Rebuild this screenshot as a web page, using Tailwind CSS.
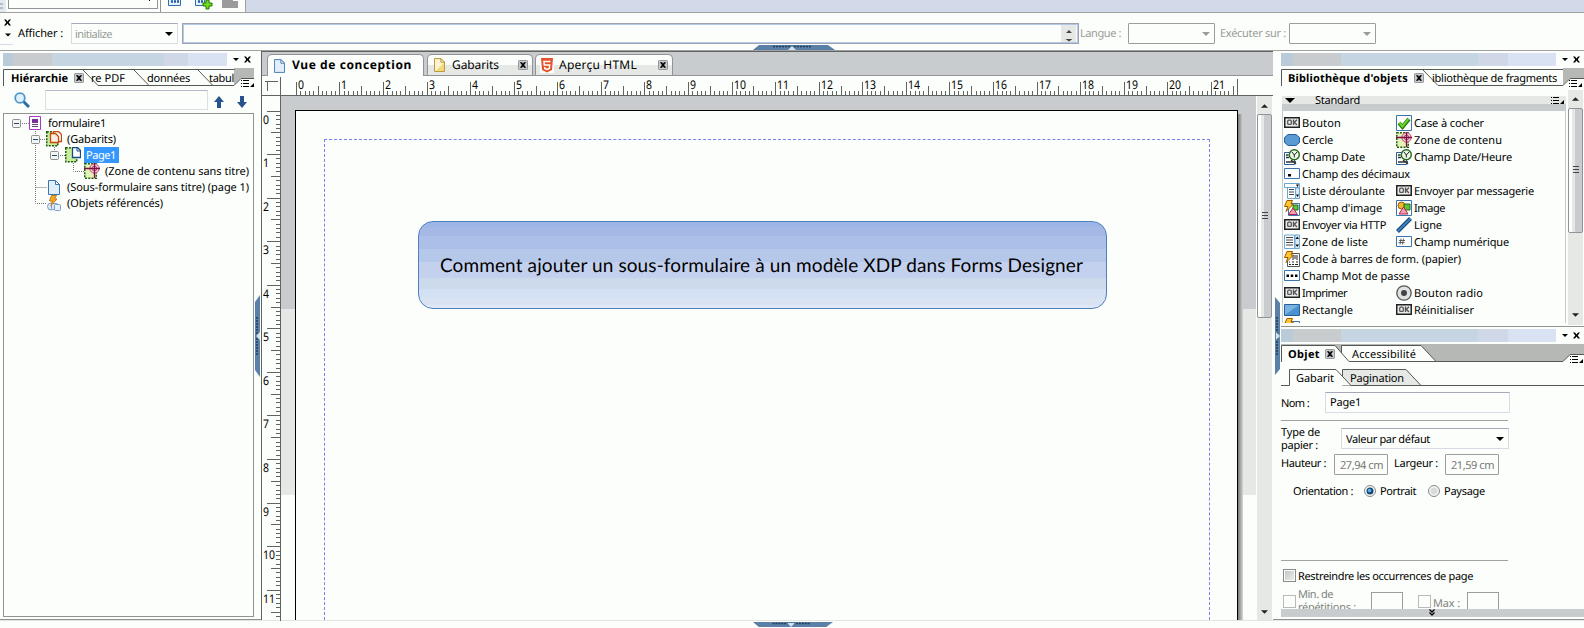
<!DOCTYPE html>
<html lang="fr">
<head>
<meta charset="utf-8">
<title>Forms Designer</title>
<script src="https://cdn.jsdelivr.net/npm/@tailwindcss/browser@4"></script>
</head>
<body class="w-[1584px] h-[628px] overflow-hidden bg-[#fbfefa] text-black text-[11px] leading-[14px] font-['Noto_Sans',sans-serif] [text-rendering:geometricPrecision] [&_.fit]:translate-y-px flex flex-col">
<svg class="hidden">
  <defs>
    <symbol id="x" viewBox="0 0 7 7"><path d="M0 .5h2l1.500 2 1.500-2h2L4.700 3.500 7 6.500H5l-1.500-2-1.500 2H0l2.300-3z" fill="#000"/></symbol>
    <symbol id="close" viewBox="0 0 11 11"><rect x=".5" y=".5" width="10" height="10" rx="1" fill="#c8cccf" stroke="#888c90"/><path d="M2 2.500h2.500l1 1.500 1-1.500H9L6.700 5.500 9 8.500H6.500l-1-1.500-1 1.500H2l2.300-3z"/></symbol>
    <symbol id="down" viewBox="0 0 8 4"><path d="M0 0h8L4 4z"/></symbol>
    <symbol id="menu" viewBox="0 0 13 7"><path d="M0 .5h1m1 0h6M0 3.500h1m1 0h6M0 6.500h1m1 0h6" stroke="#000" stroke-width="1"/><path d="M13 3v4H9z"/></symbol>
    <symbol id="ok" viewBox="0 0 16 11"><rect x=".75" y=".75" width="14.500" height="9.500" fill="#ededed" stroke="#222" stroke-width="1.500"/><rect x="3.700" y="3.200" width="3.600" height="4.200" rx="1" fill="none" stroke="#555" stroke-width="1.300"/><path d="M9.500 2.500v5.500m3.500-5.300L10.300 5.300 13 8" fill="none" stroke="#555" stroke-width="1.400"/></symbol>
    <symbol id="datef" viewBox="0 0 16 16"><path d="M.5 3.500h10v12H.5z" fill="#fff" stroke="#2c5f98"/><path d="M2 6h2.500M2 8.500h3M2 13h10m-5-2 5 4" stroke="#333" fill="none" stroke-width="1.300"/><circle cx="10.300" cy="5.700" r="5" fill="#eefbe8" stroke="#286a20" stroke-width="1.400"/><path d="M8 3l2.300 3L13 3m-2.700 3v2.500" stroke="#222" fill="none"/></symbol>
    <symbol id="zone" viewBox="0 0 16 16"><path d="M.75.75h11.500v14.500H.75z" fill="#e2f5b8" stroke="#245a10" stroke-width="1.500" stroke-dasharray="2 1.200"/><circle cx="10.500" cy="5.500" r="4.700" fill="#f7cdd9" stroke="#b94c70"/><circle cx="10.500" cy="5.500" r="2.400" fill="none" stroke="#b94c70"/><path d="M0 5.500h16M10.500 0v15" stroke="#7c1040" stroke-width="1.300"/></symbol>
    <symbol id="bolt" viewBox="0 0 10 12"><path d="M3 .5h5.500L7 4h2.500L2 11.500 4 6.500H.5z" fill="#ffc62e" stroke="#9a5800"/></symbol>
    <symbol id="doc" viewBox="0 0 12 15"><path d="M.5.5h7l4 4v10H.5z" fill="#e2eefa" stroke="#3b75b0"/><path d="M7.500.5v4h4z" fill="#fff" stroke="#3b75b0"/></symbol>
    <symbol id="minus" viewBox="0 0 9 9"><rect x=".5" y=".5" width="8" height="8" rx="1" fill="#f3f5f2" stroke="#8c8f92"/><path d="M2 4.500h5" stroke="#28466e"/></symbol>
    <symbol id="list" viewBox="0 0 16 16"><path d="M.5 1h10v13.500H.5z" fill="#fff" stroke="#6aa7d2"/><path d="M2 3.500h7M2 6h7M2 8.500h7M2 11h7" stroke="#444"/><path d="M11 1h4.500v13.500H11z" fill="#dceaf5" stroke="#6aa7d2"/><path d="M11.500 5 13.300 2.500 15 5zM11.500 10.500l1.800 2.500 1.700-2.500z"/></symbol>
    <symbol id="htab" viewBox="0 0 82 5"><path d="M0 5 6 0h69l7 5z" fill="#5a80a8"/><path d="M20 1.500h38" stroke="#243c58" stroke-width="1.500" stroke-dasharray="2 1"/><path d="M35 5l4-4 4 4z" fill="#d3e2ef"/></symbol>
    <symbol id="htabdown" viewBox="0 0 82 5"><path d="M0 0 6 5h69l7-5z" fill="#5a80a8"/><path d="M20 1.500h38" stroke="#243c58" stroke-width="1.500" stroke-dasharray="2 1"/><path d="M35 1l4 4 4-4z" fill="#d3e2ef"/></symbol>
    <symbol id="img" viewBox="0 0 16 16"><path d="M.5.500h15v15H.5z" fill="#fff" stroke="#3b75b0"/><circle cx="5.500" cy="5.500" r="3.500" fill="#f2b632" stroke="#9a5800"/><path d="M8 4h6v6H8z" fill="#60c33a" stroke="#246b18"/><path d="M7.500 7 12 14H3z" fill="#f2a0b4" stroke="#a52848"/></symbol>
  </defs>
</svg>

<!-- toolbar -->
<div class="h-[13px] shrink-0 flex border-b border-[#a0a0a0]">
  <div class="w-[246px] flex border-r border-[#a0a0a0]">
    <svg class="w-2 h-3" viewBox="0 0 8 12"><path d="M0 0h6v12H0z" fill="#e3e9f0"/><path d="M0 3h3v2H0zM0 7h3v2H0z" fill="#b4bcc8"/></svg>
    <div class="w-[150px] h-[9px] border border-t-0 border-[#909498] flex justify-end pr-[7px]"><i class="w-px h-px bg-black"></i></div>
    <div class="ml-[2px] w-px bg-[#909498]"></div>
    <svg class="ml-[7px] w-[72px] h-3" viewBox="0 0 72 12"><path d="M.5-1h12v6.500H.5zM27.500-1h11v6.500h-11z" fill="#e6f2fb" stroke="#2f6fb0"/><path d="M3 1.500h8M30 1.500h7" stroke="#1d5ea6" stroke-width="2.500" stroke-dasharray="2 1"/><path d="M38 0h3v3h3v3h-3v3h-3V6h-3V3h3z" fill="#74dc1c" stroke="#227408"/><path d="M54 0h16v8H54z" fill="#9b9b9b"/><path d="M65 0h5v1h-5z" fill="#fff"/></svg>
  </div>
  <div class="flex-1 bg-[#d2daea]"></div>
</div>

<!-- script bar -->
<div class="h-[38px] shrink-0 flex border-b border-[#a0a0a0] text-[#999c98] relative">
  <div class="w-[17px] flex flex-col items-center">
    <svg class="mt-[6px] w-[7px] h-[7px] mr-[3px]"><use href="#x"/></svg>
    <svg class="mt-[7px] w-[6px] h-[4px] mr-[2px] fill-black"><use href="#down"/></svg>
    <div class="mt-[7px] w-[13px] h-px bg-[#d2daee] mr-1"></div>
  </div>
  <span class="fit w-[45px] mt-[13px] ml-[1px] text-black">Afficher :</span>
  <div class="ml-[8px] mt-[10px] w-[107px] h-[21px] border border-[#d8dbe0] border-t-[#a4a8b8] flex items-center pl-[3px] pr-[4px] justify-between">
    <span class="fit w-[37px]">initialize</span><svg class="w-2 h-1 fill-black"><use href="#down"/></svg>
  </div>
  <div class="ml-[4px] mt-[10px] w-[897px] h-[21px] border border-[#a0a4b0] p-px flex"><div class="flex-1 outline outline-[#b4c6ea] flex justify-end pr-px">
    <svg class="w-[15px] h-[17px]" viewBox="0 0 15 17"><path d="M0 0h15v17H0z" fill="#e6e8e6"/><path d="M5 8l3-3 3 3zM4.500 14h7L8 16.500z" fill="#444"/></svg></div></div>
  <span class="fit w-[41px] mt-[13px] ml-[1px]">Langue :</span>
  <div class="ml-[7px] mt-[10px] w-[87px] h-[21px] rounded-[1px] border border-[#9a9d9a] flex items-center justify-end pr-[4px]"><svg class="w-2 h-1 fill-[#999c98]"><use href="#down"/></svg></div>
  <span class="fit w-[66px] mt-[13px] ml-[5px]">Exécuter sur :</span>
  <div class="ml-[3px] mt-[10px] w-[87px] h-[21px] rounded-[1px] border border-[#9a9d9a] flex items-center justify-end pr-[4px]"><svg class="w-2 h-1 fill-[#999c98]"><use href="#down"/></svg></div>
  <svg class="absolute left-[753px] top-[32px] w-[82px] h-[5px]"><use href="#htab"/></svg>
</div>

<div class="h-[570px] shrink-0 flex border-b border-[#e2e5e2]">
  <!-- left panel -->
  <section class="w-[255px] pl-[3px] flex flex-col border-b border-[#909090]">
    <div class="h-[13px] mt-[2px] flex items-center">
      <i class="w-[10px] h-full bg-[#b9cbd9]"></i><i class="w-[39px] h-full bg-[#c8cccf]"></i><i class="w-[112px] h-full bg-[#c5d6e2]"></i><i class="w-[24px] h-full bg-[#d0d8e7]"></i><i class="w-[39px] h-full bg-[#d9e2f3]"></i>
      <svg class="ml-[6px] w-[6px] h-[3px]"><use href="#down"/></svg><svg class="ml-[5px] w-[7px] h-[7px]"><use href="#x"/></svg>
    </div>
    <div class="relative mt-[2px] h-[19px] flex items-center">
      <svg class="absolute left-0 top-0 w-[251px] h-[19px]" viewBox="0 0 251 19"><path d="M231 0h20v10h-13l-7 7z" fill="#b5b8b4"/><path d="M.5 18V1.500h231M80 2l15 15.500h136l7-7h13M131 2l15 15.500M195 2l15 15.500" fill="none" stroke="#555855"/></svg>
      <b class="fit w-[57px] ml-[8px] relative">Hiérarchie</b><svg class="ml-[6px] w-[10px] h-[10px] relative"><use href="#close"/></svg>
      <span class="fit w-[34px] ml-[7px]">re PDF</span><span class="fit w-[43px] ml-[22px]">données</span><span class="fit w-[25px] ml-[19px]">tabul</span>
      <svg class="ml-[7px] mt-[12px] w-[13px] h-[7px]"><use href="#menu"/></svg>
    </div>
    <div class="mt-[3px] h-[20px] flex items-center">
      <svg class="ml-[11px] w-[16px] h-[16px]" viewBox="0 0 16 16"><path d="M9 9l6 6" stroke="#2b6f9f" stroke-width="3"/><circle cx="6" cy="6" r="4.800" fill="#dff1fc" stroke="#4d97cb" stroke-width="1.800"/></svg>
      <div class="ml-[15px] w-[163px] h-[20px] border border-[#dcdfe4] border-t-[#b4b8c8]"></div>
      <svg class="ml-[6px] mt-[4px] w-[10px] h-[12px]" viewBox="0 0 10 12"><path d="M5 0l5 6H7v6H3V6H0z" fill="#28538e"/></svg>
      <svg class="ml-[13px] mt-[4px] w-[10px] h-[12px]" viewBox="0 0 10 12"><path d="M5 12l5-6H7V0H3v6H0z" fill="#28538e"/></svg>
    </div>
    <div class="mt-[3px] w-[251px] h-[504px] border border-[#909390] relative pt-px">
      <svg class="absolute left-0 top-0 w-[90px] h-[100px]" viewBox="0 0 90 100"><path d="M16 9.500h10M31.500 17v72.500h11M36 25.500h8M50.500 31v6M54 41.500h8M69.500 47v10.500h11M31.500 73.500h11" fill="none" stroke="#777" stroke-dasharray="1 1"/></svg>
      <div class="relative flex flex-col">
        <div class="h-4 flex items-center pl-[8px]"><svg class="w-[9px] h-[9px]"><use href="#minus"/></svg><svg class="ml-[8px] w-[12px] h-[14px]" viewBox="0 0 12 14"><path d="M.5.5h11v13H.5z" fill="#fff" stroke="#a63cc4"/><path d="M3 3.500h6v3H3z" fill="#7d2a9e"/><path d="M3 3.500h6M3 6.500h6M3 8.500h6M3 10.500h6" stroke="#6a4580"/></svg><span class="fit w-[58px] ml-[7px]">formulaire1</span></div>
        <div class="h-4 flex items-center pl-[27px]"><svg class="w-[9px] h-[9px]"><use href="#minus"/></svg><svg class="ml-[6px] w-[16px] h-[16px]" viewBox="0 0 16 16"><path d="M.75.75h11v14h-11z" fill="#c6ee9c" stroke="#245a10" stroke-width="1.500" stroke-dasharray="2 1.200"/><path d="M7.500.5h5l3 3v7h-8z" fill="#fff" stroke="#c5480c" stroke-width="1.300"/><path d="M4.500 2.500h5l3 3v6h-8z" fill="#fdeee2" stroke="#c5480c" stroke-width="1.300"/></svg><span class="fit w-[49px] ml-[5px]">(Gabarits)</span></div>
        <div class="h-4 flex items-center pl-[46px]"><svg class="w-[9px] h-[9px]"><use href="#minus"/></svg><svg class="ml-[6px] w-[16px] h-[16px]" viewBox="0 0 16 16"><path d="M.75.75h11v14h-11z" fill="#c6ee9c" stroke="#245a10" stroke-width="1.500" stroke-dasharray="2 1.200"/><path d="M7.500.5h5l3 3v7h-8z" fill="#fff" stroke="#174a86" stroke-width="1.300"/><path d="M12 .5v3.500h3.500" fill="none" stroke="#174a86"/></svg><span class="ml-[3px] w-[35px] h-4 bg-[#3397fd] text-white flex items-center pl-[2px]"><span class="fit w-[30px]">Page1</span></span></div>
        <div class="h-4 flex items-center pl-[80px]"><svg class="w-4 h-4"><use href="#zone"/></svg><span class="fit w-[144px] ml-[5px]">(Zone de contenu sans titre)</span></div>
        <div class="h-4 flex items-center pl-[44px]"><svg class="w-[12px] h-[15px]"><use href="#doc"/></svg><span class="fit w-[182px] ml-[7px]">(Sous-formulaire sans titre) (page 1)</span></div>
        <div class="h-4 flex items-center pl-[43px]"><svg class="w-[14px] h-[16px]" viewBox="0 0 14 16"><circle cx="4" cy="11.500" r="3.500" fill="#dbe7f5" stroke="#7c9ecb"/><rect x="4.500" y="8.500" width="6" height="6" rx="1" fill="#dbe7f5" stroke="#7c9ecb"/><rect x="7.500" y="9.500" width="6" height="6" rx="1" fill="#e8f0fa" stroke="#7c9ecb"/><path d="M4.500.5h5L7.500 4H10L4 10.500l1.500-4.500H2.500z" fill="#f7a823" stroke="#c4791a"/></svg><span class="fit w-[96px] ml-[6px]">(Objets référencés)</span></div>
      </div>
    </div>
  </section>
  <div class="w-[6px] pt-[244px] border-b border-[#909090]"><svg class="w-[5px] h-[82px]" viewBox="0 0 5 82"><path d="M5 0 0 7v68l5 7z" fill="#5a80a8"/><path d="M2 22v38" stroke="#243c58" stroke-width="1.500" stroke-dasharray="2 1"/><path d="M5 37 1 41l4 4z" fill="#d3e2ef"/></svg></div>

  <!-- design view -->
  <main class="w-[1012px] border-l border-t border-[#606460] flex flex-col">
    <div class="h-[24px] bg-[#c8cccf] border-b border-[#909498] flex items-end pl-[5px]">
      <div class="-mb-px w-[157px] h-[22px] bg-[#fbfefa] border border-b-0 border-[#909498] rounded-t-[5px] flex items-center pl-[6px] text-[12px]"><svg class="w-[11px] h-[14px]"><use href="#doc"/></svg><b class="fit w-[120px] ml-[7px] -mt-[3px]">Vue de conception</b></div>
      <div class="ml-[3px] w-[106px] h-[21px] bg-linear-to-b from-[#fbfefa] from-50% to-[#e5e8e5] to-50% border border-b-0 border-[#909498] rounded-t-[5px] flex items-center pl-[6px] text-[12px]"><svg class="w-[11px] h-[14px]" viewBox="0 0 12 15"><path d="M.5.5h7l4 4v10H.5z" fill="#fdf3cc" stroke="#b28a28"/><path d="M11 5v9H2z" fill="#f3d878"/><path d="M7.500.5v4h4z" fill="#fff" stroke="#b28a28"/></svg><span class="fit w-[47px] ml-[7px] -mt-[2px]">Gabarits</span><svg class="ml-[19px] w-[10px] h-[10px]"><use href="#close"/></svg></div>
      <div class="ml-[2px] w-[138px] h-[21px] bg-linear-to-b from-[#fbfefa] from-50% to-[#e5e8e5] to-50% border border-b-0 border-[#909498] rounded-t-[5px] flex items-center pl-[4px] text-[12px]"><svg class="w-[14px] h-[15px]" viewBox="0 0 14 15"><path d="M0 0h14v15H0z" fill="#fff"/><path d="M1 0h12l-1 12-5 2.500L2 12z" fill="#e5532b"/><path d="M10.500 3.500H4l.3 3.500h5.400l-.4 3.500-2.300 1-2.300-1V9" fill="none" stroke="#fff" stroke-width="1.500"/></svg><span class="fit w-[78px] ml-[5px] -mt-[2px]">Aperçu HTML</span><svg class="ml-[21px] w-[10px] h-[10px]"><use href="#close"/></svg></div>
    </div>
    <svg id="hruler" class="w-[1011px] h-[20px] shrink-0 text-[12px]" viewBox="262 76 1011 20"></svg>
    <div class="flex-1 flex min-h-0">
      <svg id="vruler" class="w-[19px] h-[525px] shrink-0 text-[12px]" viewBox="262 96 19 525"></svg>
      <div class="w-[975px] flex flex-col relative">
        <div class="h-[213px] bg-[#c8cccf]"></div><div class="h-[186px] bg-[#e5e8e5]"></div>
        <div class="absolute left-[14px] top-[14px] w-[943px] h-[510px] bg-[#fbfefa] border border-b-0 border-black flex">
          <div class="mt-[28px] ml-[28px] w-[886px] border border-b-0 border-dashed border-[#7c80ea]">
            <div class="mt-[81px] ml-[93px] w-[689px] h-[88px] rounded-[15px] border border-[#4f81bd] bg-[linear-gradient(#9cb6e8_5px,#a3b8e5_5px,#a3b8e5_14px,#acbfe8_14px,#acbfe8_27px,#b5c8ea_27px,#b5c8ea_40px,#c3d1ef_40px,#c3d1ef_56px,#cddaec_56px,#cddaec_67px,#d4e0f3_67px,#d4e0f3_76px,#dae3f1_76px,#dae3f1_83px,#dfe8f8_83px)] pt-[31px] pl-[21px]">
              <span class="fit block w-[643px] text-[19px] leading-6 font-['Lato',sans-serif]">Comment ajouter un sous-formulaire à un modèle XDP dans Forms Designer</span>
            </div>
          </div>
        </div>
        <div class="absolute left-[957px] top-[18px] w-[5px] h-[506px] bg-linear-to-r from-[#777a78] to-[#d4d8d6]"></div>
      </div>
      <div class="w-[17px] bg-[#e6e8e6] border-x border-x-[#fbfefa] flex flex-col items-center">
        <svg class="mt-[8px] w-[7px] h-[4px] rotate-180 fill-[#222]"><use href="#down"/></svg>
        <div class="mt-[6px] w-[15px] h-[204px] rounded-[2px] border border-[#909498] bg-[linear-gradient(90deg,#fbfefa_3px,#e5e8e5_3px,#e5e8e5_6px,#c8cccf_6px)] flex flex-col items-center gap-[2px] pt-[97px]"><i class="w-[6px] h-px bg-[#444]"></i><i class="w-[6px] h-px bg-[#444]"></i><i class="w-[6px] h-px bg-[#444]"></i></div>
        <svg class="mt-auto mb-[6px] w-[7px] h-[4px] fill-[#222]"><use href="#down"/></svg>
      </div>
    </div>
  </main>

  <!-- right panels -->
  <div class="w-[8px] pt-[246px] pl-[2px] border-b border-[#909090]"><svg class="w-[5px] h-[78px]" viewBox="0 0 5 78"><path d="M0 0l5 6v66l-5 6z" fill="#5a80a8"/><path d="M2 20v38" stroke="#243c58" stroke-width="1.500" stroke-dasharray="2 1"/><path d="M1 35l4 4-4 4z" fill="#d3e2ef"/></svg></div>
  <section class="w-[303px] flex flex-col border-b border-[#909090]">
    <div class="h-[13px] mt-[2px] shrink-0 flex items-center">
      <i class="w-[12px] h-full bg-[#b9cbd9]"></i><i class="w-[48px] h-full bg-[#c8cccf]"></i><i class="w-[137px] h-full bg-[#c5d6e2]"></i><i class="w-[30px] h-full bg-[#d0d8e7]"></i><i class="w-[48px] h-full bg-[#d9e2f3]"></i>
      <svg class="ml-[6px] w-[6px] h-[3px]"><use href="#down"/></svg><svg class="ml-[5px] w-[7px] h-[7px]"><use href="#x"/></svg>
    </div>
    <div class="relative mt-[2px] h-[19px] shrink-0 flex items-center">
      <svg class="absolute left-0 top-0 w-[303px] h-[19px]" viewBox="0 0 303 19"><path d="M282 0h21v10h-14l-7 7z" fill="#b5b8b4"/><path d="M.5 18V1.500h281.500M142 2l15 15.500h125l7-7h14" fill="none" stroke="#555855"/></svg>
      <b class="fit w-[120px] ml-[7px] relative">Bibliothèque d'objets</b><svg class="ml-[6px] w-[10px] h-[10px] relative"><use href="#close"/></svg>
      <span class="fit w-[125px] ml-[8px]">ibliothèque de fragments</span><svg class="ml-[12px] mt-[12px] w-[13px] h-[7px]"><use href="#menu"/></svg>
    </div>
    <div class="h-[239px] mt-[3px] shrink-0 flex">
      <div class="w-[285px] pl-px pt-[6px] flex flex-col">
        <div class="h-[15px] shrink-0 bg-linear-to-b from-[#e5e8e5] from-50% to-[#c8cccf] to-50% flex">
          <svg class="ml-[3px] mt-[2px] w-[10px] h-[5px]"><use href="#down"/></svg><span class="fit w-[45px] ml-[20px] -mt-[3px]">Standard</span><svg class="ml-auto mr-[2px] mt-[1px] w-[13px] h-[7px]"><use href="#menu"/></svg>
        </div>
        <div class="h-[212px] border-x border-[#c8cccf] pt-[3px] pl-px overflow-hidden grid grid-cols-[112px_170px] auto-rows-[17px]">
          <div class="flex items-center gap-[2px]"><svg class="w-4 h-[11px]"><use href="#ok"/></svg><span class="fit w-[39px]">Bouton</span></div>
          <div class="flex items-center gap-[2px]"><svg class="w-4 h-4" viewBox="0 0 16 16"><path d="M.5.5h15v15H.5z" fill="#fff" stroke="#3b75b0"/><path d="M3 8l3.500 4L13 4" fill="none" stroke="#237a0c" stroke-width="4"/><path d="M3.500 8l3 3.500L12.500 4" fill="none" stroke="#6bdb27" stroke-width="2"/></svg><span class="fit w-[70px]">Case à cocher</span></div>
          <div class="flex items-center gap-[2px]"><svg class="w-4 h-3" viewBox="0 0 16 12"><path d="M4 .5h8l3.500 3v5l-3.500 3H4L.5 8.500v-5z" fill="#5b9ad2" stroke="#245f9c"/></svg><span class="fit w-[31px]">Cercle</span></div>
          <div class="flex items-center gap-[2px]"><svg class="w-4 h-4"><use href="#zone"/></svg><span class="fit w-[88px]">Zone de contenu</span></div>
          <div class="flex items-center gap-[2px]"><svg class="w-4 h-4"><use href="#datef"/></svg><span class="fit w-[63px]">Champ Date</span></div>
          <div class="flex items-center gap-[2px]"><svg class="w-4 h-4"><use href="#datef"/></svg><span class="fit w-[98px]">Champ Date/Heure</span></div>
          <div class="col-span-2 flex items-center gap-[2px]"><svg class="w-4 h-[11px]" viewBox="0 0 16 11"><path d="M.5.5h15v10H.5z" fill="#fff" stroke="#3b75b0"/><path d="M4 6h3v2.500H4z"/></svg><span class="fit w-[108px]">Champ des décimaux</span></div>
          <div class="flex items-center gap-[2px]"><svg class="w-4 h-4" viewBox="0 0 16 16"><path d="M.5.5h15v4H.5zM3.500 4.500h8v11h-8z" fill="#fff" stroke="#6aa7d2"/><path d="M5 6.500h5M5 9h5M5 11.500h5" stroke="#444"/><path d="M11.500 5h4v10.500h-4z" fill="#dceaf5" stroke="#6aa7d2"/><path d="M12 1.500h3L13.500 4zM12 11.500h3L13.500 14z"/></svg><span class="fit w-[83px]">Liste déroulante</span></div>
          <div class="flex items-center gap-[2px]"><svg class="w-4 h-[11px]"><use href="#ok"/></svg><span class="fit w-[120px]">Envoyer par messagerie</span></div>
          <div class="flex items-center gap-[2px]"><svg class="w-4 h-4" viewBox="0 0 16 16"><path d="M4.500 3.500h11v12h-11z" fill="#fff" stroke="#3b75b0"/><path d="M9 5h5v5H9z" fill="#60c33a" stroke="#246b18"/><path d="M9 8l4.500 6.500h-9z" fill="#f2a0b4" stroke="#a52848"/><use href="#bolt" width="10" height="12"/></svg><span class="fit w-[80px]">Champ d'image</span></div>
          <div class="flex items-center gap-[2px]"><svg class="w-4 h-4"><use href="#img"/></svg><span class="fit w-[31px]">Image</span></div>
          <div class="flex items-center gap-[2px]"><svg class="w-4 h-[11px]"><use href="#ok"/></svg><span class="fit w-[84px]">Envoyer via HTTP</span></div>
          <div class="flex items-center gap-[2px]"><svg class="w-4 h-4" viewBox="0 0 16 16"><path d="M1.500 14.500 14.500 1.500" stroke="#123f70" stroke-width="4"/><path d="M1.500 14.500 14.500 1.500" stroke="#3a85c6" stroke-width="2"/></svg><span class="fit w-[28px]">Ligne</span></div>
          <div class="flex items-center gap-[2px]"><svg class="w-4 h-4"><use href="#list"/></svg><span class="fit w-[66px]">Zone de liste</span></div>
          <div class="flex items-center gap-[2px]"><svg class="w-4 h-[11px]" viewBox="0 0 16 11"><path d="M.5.5h15v10H.5z" fill="#fff" stroke="#3b75b0"/><path d="M5 2.500 4 8.500M7.500 2.500l-1 6M3 4.500h6M2.500 6.500h6" stroke="#444" stroke-width=".8"/></svg><span class="fit w-[95px]">Champ numérique</span></div>
          <div class="col-span-2 flex items-center gap-[2px]"><svg class="w-4 h-4" viewBox="0 0 16 16"><path d="M3.500 2.500h12v13h-12z" fill="#fff" stroke="#555"/><path d="M9 4v5m2-5v4m2-4v5M5 13.500h2m1 0h2m1 0h3M5 11h1m2 0h2m2 0h2" stroke="#222"/><use href="#bolt" width="10" height="12"/></svg><span class="fit w-[159px]">Code à barres de form. (papier)</span></div>
          <div class="col-span-2 flex items-center gap-[2px]"><svg class="w-4 h-[11px]" viewBox="0 0 16 11"><path d="M.5.5h15v10H.5z" fill="#fff" stroke="#3b75b0"/><path d="M2.500 4.500H5V7H2.500zM6.700 4.500h2.500V7H6.700zM11 4.500h2.500V7H11z"/></svg><span class="fit w-[108px]">Champ Mot de passe</span></div>
          <div class="flex items-center gap-[2px]"><svg class="w-4 h-[11px]"><use href="#ok"/></svg><span class="fit w-[45px]">Imprimer</span></div>
          <div class="flex items-center gap-[2px]"><svg class="w-4 h-4" viewBox="0 0 16 16"><circle cx="8" cy="8" r="7.200" fill="#dfe2e2" stroke="#555" stroke-width="1.300"/><circle cx="8" cy="8" r="3" fill="#444"/></svg><span class="fit w-[69px]">Bouton radio</span></div>
          <div class="flex items-center gap-[2px]"><svg class="w-4 h-[12px]" viewBox="0 0 16 12"><path d="M.5.5h15v11H.5z" fill="#4a92cf" stroke="#245f9c"/><path d="M1 1h14L1 11z" fill="#79b2de"/></svg><span class="fit w-[51px]">Rectangle</span></div>
          <div class="flex items-center gap-[2px]"><svg class="w-4 h-[11px]"><use href="#ok"/></svg><span class="fit w-[60px]">Réinitialiser</span></div>
          <div class="col-span-2"><svg class="w-4 h-4" viewBox="0 0 16 16"><path d="M5 3.500h10.500v12H5z" fill="#fff" stroke="#3b75b0"/><use href="#bolt" width="10" height="12"/></svg></div>
        </div>
      </div>
      <div class="ml-px w-[17px] bg-[#e6e8e6] border-x border-x-[#fbfefa] flex flex-col items-center mb-[4px]">
        <svg class="mt-[7px] w-[7px] h-[4px] rotate-180 fill-[#222]"><use href="#down"/></svg>
        <div class="mt-[7px] w-[15px] h-[125px] rounded-[2px] border border-[#909498] bg-[linear-gradient(90deg,#fbfefa_3px,#e5e8e5_3px,#e5e8e5_6px,#c8cccf_6px)] flex flex-col items-center gap-[2px] pt-[57px]"><i class="w-[6px] h-px bg-[#444]"></i><i class="w-[6px] h-px bg-[#444]"></i><i class="w-[6px] h-px bg-[#444]"></i></div>
        <svg class="mt-auto mb-[8px] w-[7px] h-[4px] fill-[#222]"><use href="#down"/></svg>
      </div>
    </div>
    <div class="-mt-[3px] h-px shrink-0 bg-[#909390]"></div>
    <div class="h-[13px] mt-[2px] shrink-0 flex items-center">
      <i class="w-[12px] h-full bg-[#b9cbd9]"></i><i class="w-[48px] h-full bg-[#c8cccf]"></i><i class="w-[137px] h-full bg-[#c5d6e2]"></i><i class="w-[30px] h-full bg-[#d0d8e7]"></i><i class="w-[48px] h-full bg-[#d9e2f3]"></i>
      <svg class="ml-[6px] w-[6px] h-[3px]"><use href="#down"/></svg><svg class="ml-[5px] w-[7px] h-[7px]"><use href="#x"/></svg>
    </div>
    <div class="relative mt-[2px] h-[19px] shrink-0 flex items-center">
      <svg class="absolute left-0 top-0 w-[303px] h-[19px]" viewBox="0 0 303 19"><path d="M0 0h303v10.500h-14l-7 7H0z" fill="#b5b8b4"/><path d="M60.500 17.500v-16H140l15 16z" fill="#fbfefa" stroke="#555855"/><path d="M0 18V1.500h54l14 16V19H0z" fill="#fbfefa"/><path d="M.5 18V1.500H54l14 16h214l7-7h14" fill="none" stroke="#555855"/></svg>
      <b class="fit w-[32px] ml-[7px] relative">Objet</b><svg class="ml-[5px] w-[10px] h-[10px] relative"><use href="#close"/></svg>
      <span class="fit w-[64px] ml-[17px] relative">Accessibilité</span><svg class="ml-auto mr-[1px] mt-[12px] w-[13px] h-[7px] relative"><use href="#menu"/></svg>
    </div>
    <div class="relative mt-[6px] h-[17px] shrink-0 flex items-center">
      <svg class="absolute left-0 top-0 w-[303px] h-[17px]" viewBox="0 0 303 17"><path d="M61.500 16.500V.5H125l15 16z" fill="#e5e8e5" stroke="#555855"/><path d="M8 0h47l15 16.500H8z" fill="#fbfefa"/><path d="M0 16.500h8.500V.5H55l15 16h233" fill="none" stroke="#555855"/></svg>
      <span class="fit w-[38px] ml-[15px] relative">Gabarit</span><span class="fit w-[54px] ml-[16px] relative">Pagination</span>
    </div>
    <div class="mt-[6px] h-[21px] shrink-0 flex items-center">
      <span class="fit w-[28px]">Nom :</span><div class="ml-[16px] w-[185px] h-[21px] border border-[#d8dbe4] border-t-[#a4a8b8] px-[4px] py-[2px]"><span class="fit block w-[31px]">Page1</span></div>
    </div>
    <div class="mt-[7px] w-[227px] h-px shrink-0 bg-[#a0a39f]"></div>
    <div class="mt-[5px] h-[28px] shrink-0 flex">
      <div class="w-[60px] leading-[13px] -mt-px flex flex-col"><span class="fit w-[39px]">Type de</span><span class="fit w-[37px]">papier :</span></div>
      <div class="mt-[2px] w-[168px] h-[21px] border border-[#d8dbe4] border-t-[#a4a8b8] flex items-center justify-between pl-[4px] pr-[4px]"><span class="fit w-[84px]">Valeur par défaut</span><svg class="w-2 h-1"><use href="#down"/></svg></div>
    </div>
    <div class="h-[21px] shrink-0 flex">
      <span class="fit w-[45px] mt-[2px]">Hauteur :</span><div class="ml-[8px] w-[54px] h-[21px] rounded-[1px] border border-[#9a9d9a] flex items-center pl-[5px] text-[#777]"><span class="fit w-[43px]">27,94 cm</span></div>
      <span class="fit w-[44px] mt-[2px] ml-[6px]">Largeur :</span><div class="ml-[7px] w-[54px] h-[21px] rounded-[1px] border border-[#9a9d9a] flex items-center pl-[5px] text-[#777]"><span class="fit w-[43px]">21,59 cm</span></div>
    </div>
    <div class="mt-[9px] h-[14px] shrink-0 flex items-center pl-[12px]">
      <span class="fit w-[60px] -mt-px">Orientation :</span>
      <svg class="ml-[11px] w-[12px] h-[12px]" viewBox="0 0 12 12"><circle cx="6" cy="6" r="5.500" fill="#f4f6f4" stroke="#888"/><circle cx="6" cy="6" r="3.500" fill="#174a7c"/><circle cx="5.500" cy="5.500" r="1.700" fill="#5cb8ea"/></svg><span class="fit w-[36px] ml-[4px]">Portrait</span>
      <svg class="ml-[12px] w-[12px] h-[12px]" viewBox="0 0 12 12"><circle cx="6" cy="6" r="5.500" fill="#f4f6f4" stroke="#888"/><circle cx="6" cy="6" r="3.500" fill="#d8dbd9"/></svg><span class="fit w-[41px] ml-[4px]">Paysage</span>
    </div>
    <div class="mt-[62px] w-[227px] h-px shrink-0 bg-[#a0a39f]"></div>
    <div class="mt-[8px] h-[13px] shrink-0 flex items-center pl-[2px]"><i class="w-[13px] h-[13px] border border-[#888b88] bg-linear-to-br from-[#c0c4c7] to-[#eef0ee] shadow-[inset_0_0_0_1px_#fbfefa]"></i><span class="fit w-[175px] ml-[2px]">Restreindre les occurrences de page</span></div>
    <div class="mt-[5px] h-[22px] shrink-0 flex pl-[2px] overflow-hidden text-[#808380]">
      <i class="w-[13px] h-[13px] mt-[8px] border border-[#b8bbb8]"></i><div class="ml-[2px] w-[58px] leading-[13px] flex flex-col"><span class="fit w-[35px]">Min. de</span><span class="fit w-[58px]">répétitions :</span></div>
      <i class="ml-[15px] mt-[5px] w-[32px] h-[21px] border border-[#9a9d9a]"></i>
      <i class="ml-[15px] mt-[8px] w-[13px] h-[13px] border border-[#b8bbb8]"></i><span class="fit w-[27px] ml-[2px] mt-[9px]">Max :</span>
      <i class="ml-[7px] mt-[5px] w-[32px] h-[21px] border border-[#9a9d9a]"></i>
    </div>
    <div class="h-[8px] shrink-0 bg-[#c8cccf] pl-[148px]"><svg class="w-[6px] h-[7px]" viewBox="0 0 6 7"><path d="M.5.5 3 3 5.500.5M.5 3.500 3 6l2.500-2.500" fill="none" stroke="#000" stroke-width="1.300"/></svg></div>
  </section>
</div>
<div class="flex-1 pt-px pl-[753px]"><svg class="w-[80px] h-[5px] block"><use href="#htabdown"/></svg></div>

<script>
  // Rulers: one centimetre spans 43.57 px.
  const CM = 43.57;
  const tick = (n) => n % 10 === 0 ? 13 : n % 5 === 0 ? 9 : 4;
  let h = '<path d="M262 95.500H1273M280.500 77V95M265 81.500h13M267.500 81v10M1237.500 79v16', t = '';
  for (let n = 0; n <= 215; n++) {
    const x = Math.floor(296.400 + n * CM / 10) + .5;
    h += `M${x} ${95 - tick(n)}V95`;
    if (n % 10 === 0) t += `<text x="${x + 1.500}" y="89" textLength="${n < 100 ? 6 : 12}" lengthAdjust="spacingAndGlyphs">${n / 10}</text>`;
  }
  document.getElementById('hruler').innerHTML = h + '" stroke="#606460" fill="none"/>' + t;
  let v = '<path d="M280.500 96V621'; t = '';
  for (let n = 0; n <= 116; n++) {
    const y = Math.floor(111 + n * CM / 10) + .5;
    v += `M${280 - tick(n)} ${y}H280`;
    if (n % 10 === 0) t += `<text x="263" y="${y + 12.500}" textLength="${n < 100 ? 6 : 12}" lengthAdjust="spacingAndGlyphs">${n / 10}</text>`;
  }
  document.getElementById('vruler').innerHTML = v + '" stroke="#606460" fill="none"/>' + t;

  // Spread each label over the width of its box.
  function fit(el) {
    el.style.whiteSpace = 'nowrap';
    el.style.flexShrink = '0';
    el.style.letterSpacing = '0px';
    const r = document.createRange();
    r.selectNodeContents(el);
    const w = el.getBoundingClientRect().width;
    el.style.letterSpacing = (w - r.getBoundingClientRect().width) / el.textContent.length + 'px';
  }
  const labels = [...document.querySelectorAll('.fit')];
  const observer = new ResizeObserver((entries) => entries.forEach((e) => fit(e.target)));
  labels.forEach((el) => { fit(el); observer.observe(el); });
  addEventListener('load', () => labels.forEach(fit));
</script>
</body>
</html>
